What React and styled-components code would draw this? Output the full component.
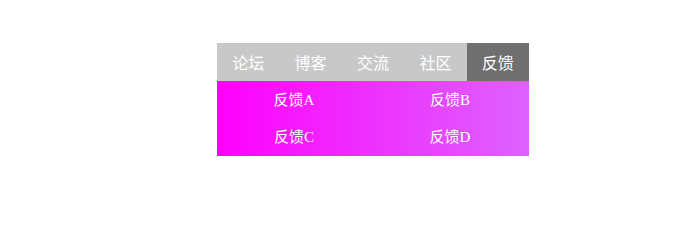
import React from "react";
import styled, { createGlobalStyle } from "styled-components";

const Global = createGlobalStyle`
  html, body { margin: 0; padding: 0; background: #fff; }
  body { font-family: "Liberation Serif", "Noto Sans CJK SC", serif; }
`;

const Page = styled.div`
  display: flex;
  justify-content: flex-start;
  padding: 43px 0 0 217px;
`;

const Menu = styled.div`
  width: 312px;
  display: flex;
  flex-direction: column;
`;

const Nav = styled.ul`
  display: flex;
  margin: 0;
  padding: 0;
  list-style: none;
  background: #c8c8c8;
  height: 38px;
`;

const NavItem = styled.li`
  flex: 1;
  display: flex;
  align-items: center;
  justify-content: center;
  font-family: "Noto Sans CJK SC", "Noto Sans", sans-serif;
  font-size: 16px;
  color: #fff;
  background: ${(p) => (p.$active ? "#6f6f6f" : "transparent")};
`;

const Dropdown = styled.div`
  display: grid;
  grid-template-columns: 1fr 1fr;
  grid-auto-rows: 37.5px;
  background: linear-gradient(to right, #ff00ff, #dd62ff);
`;

const DropItem = styled.div`
  display: flex;
  align-items: center;
  justify-content: center;
  padding: 0 2px 3px 0;
  font-family: "Liberation Serif", "Noto Sans CJK SC", serif;
  font-size: 15px;
  color: #fff;
`;

const navItems = ["论坛", "博客", "交流", "社区", "反馈"];
const dropItems = ["反馈A", "反馈B", "反馈C", "反馈D"];

export default function App() {
  return (
    <>
      <Global />
      <Page>
        <Menu>
          <Nav>
            {navItems.map((t, i) => (
              <NavItem key={t} $active={i === navItems.length - 1}>
                {t}
              </NavItem>
            ))}
          </Nav>
          <Dropdown>
            {dropItems.map((t) => (
              <DropItem key={t}>{t}</DropItem>
            ))}
          </Dropdown>
        </Menu>
      </Page>
    </>
  );
}
